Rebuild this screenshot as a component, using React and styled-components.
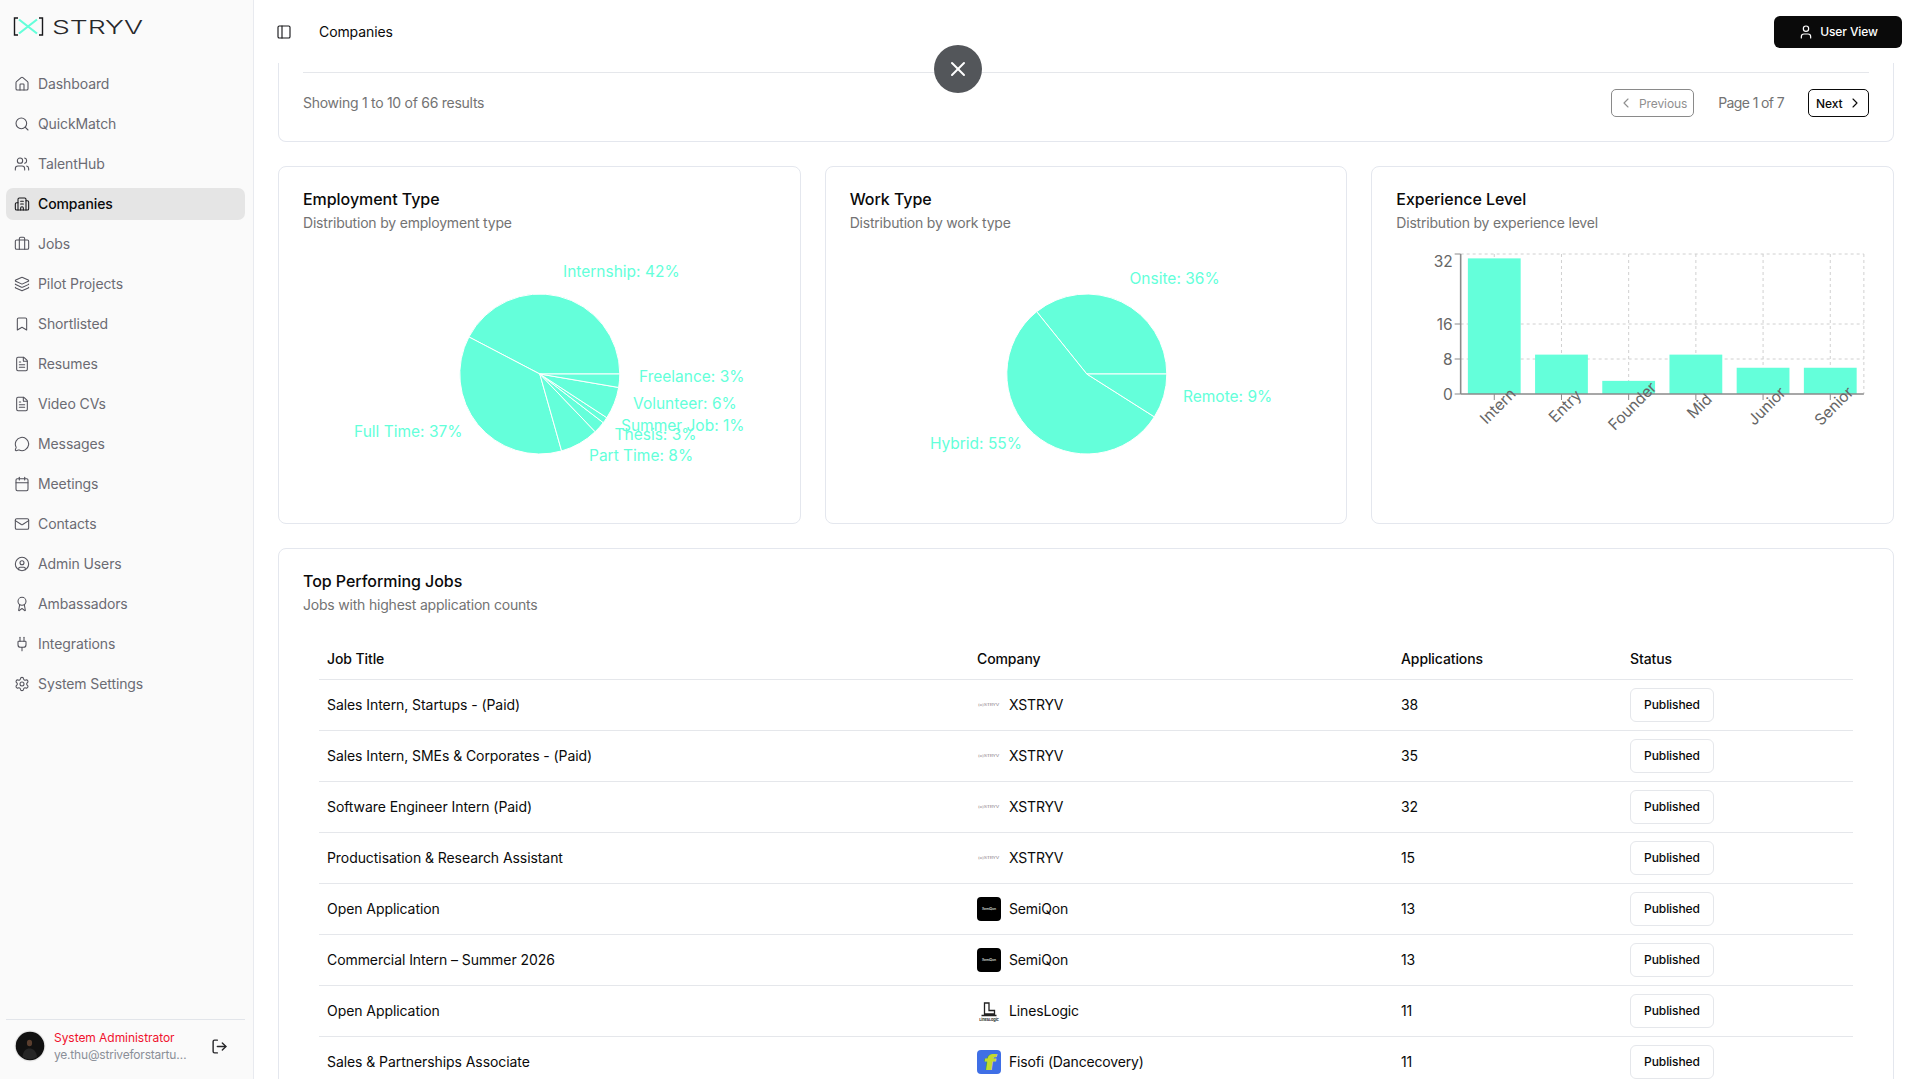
import React from "react";
import styled, { createGlobalStyle } from "styled-components";
import {
  House, Search, Users, Building2, Briefcase, Layers, Bookmark, FileText, MessageCircle,
  Calendar, Mail, CircleUser, Award, Plug, Settings, LogOut, PanelLeft, User, X,
  ChevronLeft, ChevronRight,
} from "lucide-react";

const TEAL = "#64ffda";
const FONT = `Inter, "Liberation Sans", sans-serif`;

const Global = createGlobalStyle`
  html, body { margin: 0; padding: 0; height: 100%; background: #fff; overflow: hidden; }
  body { font-family: ${FONT}; color: #0a0a0a; }
  * { box-sizing: border-box; }
`;

const Shell = styled.div`
  display: flex;
  width: 100%;
  height: 100vh;
  overflow: hidden;
  position: relative;
`;

/* ---------- sidebar ---------- */
const Sidebar = styled.aside`
  flex: 0 0 254px;
  display: flex;
  flex-direction: column;
  height: 100%;
  background: #fafafa;
  border-right: 1px solid #e8eaef;
`;
const Brand = styled.div`
  height: 68px;
  padding: 14px 0 0 12px;
`;
const Nav = styled.nav`
  display: flex;
  flex-direction: column;
  gap: 8px;
  padding: 0 8px 0 6px;
`;
const NavItem = styled.a`
  display: flex;
  align-items: center;
  gap: 8px;
  height: 32px;
  padding: 0 8px 1px;
  border-radius: 7px;
  font-size: 14px;
  letter-spacing: -0.1px;
  color: ${(p) => (p.$active ? "#0a0a0a" : "#6b6b73")};
  font-weight: ${(p) => (p.$active ? 500 : 400)};
  background: ${(p) => (p.$active ? "#e5e5e5" : "transparent")};
  svg { flex: 0 0 16px; color: ${(p) => (p.$active ? "#18181b" : "#52525b")}; }
`;
const Footer = styled.div`
  margin: auto 8px 0 6px;
  height: 60px;
  border-top: 1px solid #e2e5ea;
  padding: 10px 8px 0;
  display: flex;
  align-items: flex-start;
  gap: 8px;
`;
const Avatar = styled.svg`
  flex: 0 0 32px;
  width: 32px;
  height: 32px;
`;
const UserText = styled.div`
  width: 134px;
  display: flex;
  flex-direction: column;
  gap: 1px;
`;
const UserName = styled.div`
  font-size: 12px;
  line-height: 16px;
  font-weight: 400;
  letter-spacing: -0.05px;
  color: #f0122d;
  white-space: nowrap;
`;
const UserMail = styled.div`
  font-size: 12px;
  line-height: 16px;
  letter-spacing: -0.2px;
  color: #8a8f98;
  white-space: nowrap;
  overflow: hidden;
  text-overflow: ellipsis;
`;
const LogoutBtn = styled.button`
  margin-left: auto;
  width: 36px;
  height: 32px;
  padding: 0;
  border: 0;
  background: none;
  color: #27272a;
  display: flex;
  align-items: center;
  justify-content: center;
`;

/* ---------- main ---------- */
const Main = styled.main`
  flex: 1;
  min-width: 0;
  display: flex;
  flex-direction: column;
  height: 100%;
`;
const Header = styled.header`
  flex: 0 0 63px;
  display: flex;
  align-items: center;
  padding: 0 15px 0 22px;
  gap: 27px;
`;
const SideToggle = styled.span`
  display: flex;
  color: #18181b;
`;
const Crumb = styled.span`
  font-size: 14px;
  color: #0a0a0a;
  letter-spacing: -0.1px;
  padding-bottom: 1px;
`;
const UserViewBtn = styled.button`
  margin-left: auto;
  width: 128px;
  height: 32px;
  border: 0;
  border-radius: 6px;
  background: #0a0a0a;
  color: #fff;
  font: 500 12px ${FONT};
  letter-spacing: -0.1px;
  display: flex;
  align-items: center;
  justify-content: center;
  gap: 6px;
`;
const CloseFab = styled.button`
  position: absolute;
  left: 934px;
  top: 45px;
  width: 48px;
  height: 48px;
  border: 0;
  padding: 0;
  border-radius: 50%;
  background: #53565a;
  color: #fff;
  display: flex;
  align-items: center;
  justify-content: center;
`;
const Scroll = styled.div`
  flex: 1;
  min-height: 0;
  overflow: hidden;
  padding: 0 23px 0 24px;
  display: flex;
  flex-direction: column;
  gap: 24px;
`;
const Card = styled.section`
  background: #fff;
  border: 1px solid #e4e7ee;
  border-radius: 8px;
  padding: 24px;
`;
const PagerCard = styled(Card)`
  flex: none;
  border-top: 0;
  border-radius: 0 0 8px 8px;
  padding-top: 9px;
`;
const PagerRow = styled.div`
  border-top: 1px solid #e5e7eb;
  padding-top: 16px;
  display: flex;
  align-items: center;
`;
const MutedText = styled.span`
  font-size: 14px;
  letter-spacing: ${(p) => (p.$tight ? "-0.62px" : "-0.27px")};
  color: #737373;
  padding-bottom: 1px;
`;
const PageControls = styled.div`
  margin-left: auto;
  display: flex;
  align-items: center;
  gap: 24px;
`;
const PageBtn = styled.button`
  height: 28px;
  padding: ${(p) => (p.$off ? "0 6px 0 6px" : "0 5px 0 7px")};
  width: ${(p) => (p.$off ? "83px" : "61px")};
  border: 1px solid ${(p) => (p.$off ? "#8a8a8a" : "#0a0a0a")};
  border-radius: 5px;
  background: #fff;
  color: ${(p) => (p.$off ? "#8f8f8f" : "#0a0a0a")};
  font: ${(p) => (p.$off ? 400 : 500)} 12px ${FONT};
  letter-spacing: -0.1px;
  display: flex;
  align-items: center;
  justify-content: space-between;
`;
const ChartGrid = styled.div`
  flex: none;
  display: grid;
  grid-template-columns: repeat(3, 1fr);
  gap: 24px;
`;
const CardTitle = styled.h3`
  margin: 0;
  font-size: 16px;
  line-height: 16px;
  font-weight: 500;
  letter-spacing: -0.05px;
  color: #0a0a0a;
`;
const CardSub = styled.p`
  margin: 6px 0 0;
  font-size: 14px;
  line-height: 20px;
  letter-spacing: -0.2px;
  color: #737373;
`;
const ChartSvg = styled.svg`
  display: block;
  width: 100%;
  height: 266px;
  overflow: visible;
  text { font-family: ${FONT}; font-size: 15.5px; }
`;
const TableCard = styled(Card)`
  flex: none;
`;
const TableWrap = styled.div`
  margin-top: 24px;
  padding: 0 16px;
`;
const Table = styled.table`
  width: 100%;
  table-layout: fixed;
  border-collapse: separate;
  border-spacing: 0;
`;
const Col = styled.col`
  width: ${(p) => p.$w}px;
`;
const Th = styled.th`
  height: 41px;
  padding: 0 8px 1px;
  text-align: left;
  font-size: 14px;
  font-weight: 450;
  letter-spacing: -0.1px;
  color: #0a0a0a;
  border-bottom: 1px solid #e5e7eb;
`;
const Td = styled.td`
  height: 51px;
  padding: 0 8px 1px;
  font-size: 14px;
  letter-spacing: -0.07px;
  color: #0a0a0a;
  border-bottom: 1px solid #e5e7eb;
`;
const CompanyCell = styled.div`
  display: flex;
  align-items: center;
  gap: 8px;
  letter-spacing: -0.15px;
`;
const MiniLogo = styled.svg`
  flex: 0 0 24px;
  width: 24px;
  height: 24px;
  text { font-family: ${FONT}; }
`;
const Badge = styled.span`
  display: inline-flex;
  align-items: center;
  height: 34px;
  padding: 0 13px;
  border: 1px solid #e5e7eb;
  border-radius: 6px;
  font-size: 12px;
  font-weight: 500;
  color: #0a0a0a;
`;

/* ---------- data ---------- */
const nav = [
  ["Dashboard", House], ["QuickMatch", Search], ["TalentHub", Users], ["Companies", Building2],
  ["Jobs", Briefcase], ["Pilot Projects", Layers], ["Shortlisted", Bookmark], ["Resumes", FileText],
  ["Video CVs", FileText], ["Messages", MessageCircle], ["Meetings", Calendar], ["Contacts", Mail],
  ["Admin Users", CircleUser], ["Ambassadors", Award], ["Integrations", Plug], ["System Settings", Settings],
];

const employment = {
  cx: 236.8, cy: 141,
  stops: [0, 152.4, 285.8, 313.8, 322.5, 326.9, 350.3, 360],
  labels: [
    ["Internship: 42%", 260, 38.7, "start"],
    ["Full Time: 37%", 159.5, 198.3, "end"],
    ["Part Time: 8%", 286, 222.3, "start"],
    ["Thesis: 3%", 311.5, 201.7, "start"],
    ["Summer Job: 1%", 318, 192, "start"],
    ["Volunteer: 6%", 330, 170, "start"],
    ["Freelance: 3%", 336, 143.7, "start"],
  ],
};
const workType = {
  cx: 236.8, cy: 141,
  stops: [0, 128.8, 327.6, 360],
  labels: [
    ["Onsite: 36%", 279.5, 45.3, "start"],
    ["Hybrid: 55%", 172, 210.7, "end"],
    ["Remote: 9%", 333, 163.3, "start"],
  ],
};
const levels = [["Intern", 31], ["Entry", 9], ["Founder", 3], ["Mid", 9], ["Junior", 6], ["Senior", 6]];
const rows = [
  ["Sales Intern, Startups - (Paid)", "x", "XSTRYV", 38],
  ["Sales Intern, SMEs & Corporates - (Paid)", "x", "XSTRYV", 35],
  ["Software Engineer Intern (Paid)", "x", "XSTRYV", 32],
  ["Productisation & Research Assistant", "x", "XSTRYV", 15],
  ["Open Application", "s", "SemiQon", 13],
  ["Commercial Intern – Summer 2026", "s", "SemiQon", 13],
  ["Open Application", "l", "LinesLogic", 11],
  ["Sales & Partnerships Associate", "f", "Fisofi (Dancecovery)", 11],
];

/* ---------- drawings ---------- */
const Logo = () => (
  <svg width="134" height="24" viewBox="0 0 134 24">
    <path d="M6 4H2.500V21H6M27 4H30.500V21H27" fill="none" stroke="#18181b" strokeWidth="1.400" />
    <path d="M7 5.500L25 19.500M25 5.500L7 19.500" fill="none" stroke={TEAL} strokeWidth="2.200" />
    <text x="40" y="19.500" fontFamily={FONT} fontSize="19" fontWeight="300" fill="#27272a"
      textLength="91" lengthAdjust="spacingAndGlyphs">STRYV</text>
  </svg>
);

const AvatarArt = () => (
  <Avatar viewBox="0 0 32 32">
    <circle cx="16" cy="16" r="15.500" fill="#e7e7e7" />
    <circle cx="16" cy="16" r="14.300" fill="#111" />
    <ellipse cx="15.500" cy="13" rx="2.600" ry="3.200" fill="#5a3e2e" />
    <path d="M8.500 27c.5-6 3.500-8.500 7-8.500s7 2.500 7.500 8.500a14 14 0 0 1-14.500 0z" fill="#262626" />
  </Avatar>
);

const R = 80;
const polar = (cx, cy, deg) => [
  cx + R * Math.cos((deg * Math.PI) / 180),
  cy - R * Math.sin((deg * Math.PI) / 180),
];

const PieChart = ({ data }) => {
  const { cx, cy, stops, labels } = data;
  return (
    <ChartSvg>
      {stops.slice(0, -1).map((a, i) => {
        const b = stops[i + 1];
        const [x1, y1] = polar(cx, cy, a);
        const [x2, y2] = polar(cx, cy, b);
        return (
          <path
            key={a}
            d={`M${cx} ${cy}L${x1} ${y1}A${R} ${R} 0 ${b - a > 180 ? 1 : 0} 0 ${x2} ${y2}Z`}
            fill={TEAL}
            stroke="#fff"
            strokeWidth="1"
          />
        );
      })}
      {labels.map(([t, x, y, anchor]) => (
        <text key={t} x={x} y={y} fill={TEAL} textAnchor={anchor} dominantBaseline="central">{t}</text>
      ))}
    </ChartSvg>
  );
};

const BarChart = () => {
  const left = 64.67, band = 67.2, top = 21, base = 161, barW = 52.8;
  const right = left + band * 6;
  const unit = (base - top) / 32;
  const centers = levels.map((_, i) => left + band * (i + 0.5));
  const ticks = [[32, 28], [16, 91], [8, 126], [0, 161]];
  return (
    <ChartSvg>
      <g stroke="#d0d0d0" strokeDasharray="3 3" fill="none">
        {[top, 91, 126].map((y) => <line key={y} x1={left} x2={right} y1={y} y2={y} />)}
        {[...centers, right].map((x) => <line key={x} x1={x} x2={x} y1={top} y2={base} />)}
      </g>
      {levels.map(([n, v], i) => (
        <rect key={n} x={centers[i] - barW / 2} y={base - v * unit} width={barW} height={v * unit} fill={TEAL} />
      ))}
      <g stroke="#8a8a8a" fill="none">
        <line x1={left} x2={left} y1={top} y2={base} strokeWidth="1.600" />
        <line x1={left} x2={right} y1={base} y2={base} strokeWidth="1.600" />
        {[top, 91, 126, 161].map((y) => <line key={y} x1={left - 6} x2={left} y1={y} y2={y} />)}
        {centers.map((x) => <line key={x} x1={x} x2={x} y1={base} y2={base + 6} />)}
      </g>
      {ticks.map(([t, y]) => (
        <text key={t} x={left - 8} y={y} fill="#666" textAnchor="end" dominantBaseline="central">{t}</text>
      ))}
      {levels.map(([n], i) => (
        <text
          key={n}
          x={centers[i] + 3.5}
          y={173}
          fill="#666"
          textAnchor="middle"
          dominantBaseline="central"
          transform={`rotate(-45 ${centers[i] + 3.5} 173)`}
        >
          {n}
        </text>
      ))}
    </ChartSvg>
  );
};

const CompanyLogo = ({ kind }) => {
  if (kind === "s") {
    return (
      <MiniLogo viewBox="0 0 24 24">
        <rect width="24" height="24" rx="4" fill="#000" />
        <text x="12" y="13" fontSize="3.400" fontWeight="600" fill="#cfcfcf" textAnchor="middle">SemiQon</text>
      </MiniLogo>
    );
  }
  if (kind === "l") {
    return (
      <MiniLogo viewBox="0 0 24 24">
        <path d="M7.500 4h4.500v7.500h5.500V15H7.500z M4.500 16.500h15" fill="none" stroke="#222" strokeWidth="1.300" />
        <text x="12" y="21.500" fontSize="4" fontWeight="700" fill="#333" textAnchor="middle">LinesLogic</text>
      </MiniLogo>
    );
  }
  if (kind === "f") {
    return (
      <MiniLogo viewBox="0 0 24 24">
        <rect width="24" height="24" rx="4" fill="#3f6fe6" />
        <text
          x="0"
          y="0"
          fontSize="21"
          fontWeight="900"
          fill="#c4d92e"
          textAnchor="middle"
          transform="translate(12 20) skewX(-8) scale(1.400 1)"
        >
          f
        </text>
      </MiniLogo>
    );
  }
  return (
    <MiniLogo viewBox="0 0 24 24">
      <text x="1" y="13" fontSize="3.200" fontWeight="500" fill="#9a8f96" textLength="21" lengthAdjust="spacingAndGlyphs">[x]STRYV</text>
    </MiniLogo>
  );
};

/* ---------- page ---------- */
export default function App() {
  return (
    <>
      <Global />
      <Shell>
        <Sidebar>
          <Brand><Logo /></Brand>
          <Nav>
            {nav.map(([label, Icon]) => (
              <NavItem key={label} $active={label === "Companies"}>
                <Icon size={16} strokeWidth={1.600} />
                {label}
              </NavItem>
            ))}
          </Nav>
          <Footer>
            <AvatarArt />
            <UserText>
              <UserName>System Administrator</UserName>
              <UserMail>ye.thu@striveforstartups.com</UserMail>
            </UserText>
            <LogoutBtn><LogOut size={17} strokeWidth={2} /></LogoutBtn>
          </Footer>
        </Sidebar>
        <Main>
          <Header>
            <SideToggle><PanelLeft size={16} strokeWidth={1.700} /></SideToggle>
            <Crumb>Companies</Crumb>
            <UserViewBtn><User size={16} strokeWidth={1.800} />User View</UserViewBtn>
          </Header>
          <Scroll>
            <PagerCard>
              <PagerRow>
                <MutedText>Showing 1 to 10 of 66 results</MutedText>
                <PageControls>
                  <PageBtn $off><ChevronLeft size={16} strokeWidth={1.700} />Previous</PageBtn>
                  <MutedText $tight>Page 1 of 7</MutedText>
                  <PageBtn>Next<ChevronRight size={16} strokeWidth={1.700} /></PageBtn>
                </PageControls>
              </PagerRow>
            </PagerCard>
            <ChartGrid>
              <Card>
                <CardTitle>Employment Type</CardTitle>
                <CardSub>Distribution by employment type</CardSub>
                <PieChart data={employment} />
              </Card>
              <Card>
                <CardTitle>Work Type</CardTitle>
                <CardSub>Distribution by work type</CardSub>
                <PieChart data={workType} />
              </Card>
              <Card>
                <CardTitle>Experience Level</CardTitle>
                <CardSub>Distribution by experience level</CardSub>
                <BarChart />
              </Card>
            </ChartGrid>
            <TableCard>
              <CardTitle>Top Performing Jobs</CardTitle>
              <CardSub>Jobs with highest application counts</CardSub>
              <TableWrap>
                <Table>
                  <colgroup>
                    <Col $w={650} /><Col $w={424} /><Col $w={229} /><Col $w={231} />
                  </colgroup>
                  <thead>
                    <tr><Th>Job Title</Th><Th>Company</Th><Th>Applications</Th><Th>Status</Th></tr>
                  </thead>
                  <tbody>
                    {rows.map(([title, kind, company, apps], i) => (
                      <tr key={i}>
                        <Td>{title}</Td>
                        <Td><CompanyCell><CompanyLogo kind={kind} />{company}</CompanyCell></Td>
                        <Td>{apps}</Td>
                        <Td><Badge>Published</Badge></Td>
                      </tr>
                    ))}
                  </tbody>
                </Table>
              </TableWrap>
            </TableCard>
          </Scroll>
        </Main>
        <CloseFab><X size={24} strokeWidth={2} /></CloseFab>
      </Shell>
    </>
  );
}
